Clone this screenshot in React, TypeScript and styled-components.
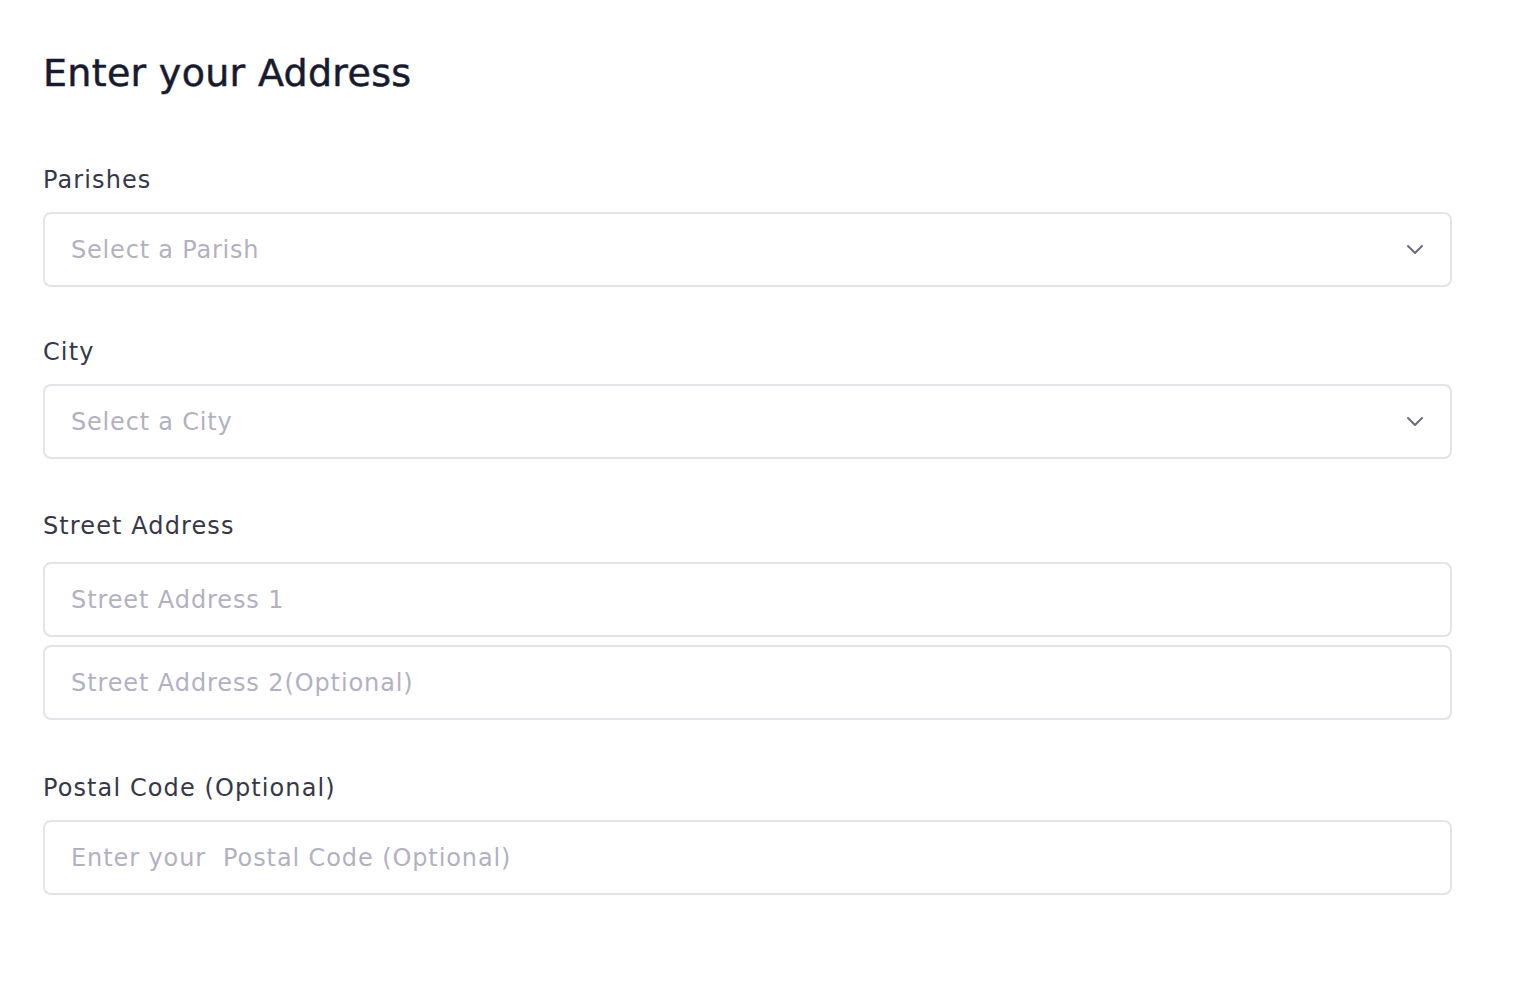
import { createGlobalStyle, styled } from "styled-components";

const GlobalStyle = createGlobalStyle`
  body {
    margin: 0;
    background: #ffffff;
    font-family: "DejaVu Sans", "Noto Sans", sans-serif;
  }
`;

const Page = styled.div`
  padding: 47px 43px 60px;
  width: 1409px;
`;

const Title = styled.h1`
  margin: 0 0 61px;
  font-size: 38px;
  line-height: 52px;
  font-weight: 400;
  letter-spacing: 0.3px;
  color: #181a2e;
  -webkit-text-stroke: 0.5px #181a2e;
`;

const Form = styled.form`
  display: flex;
  flex-direction: column;
  gap: 45px;
`;

const Field = styled.div`
  display: flex;
  flex-direction: column;
`;

const Label = styled.label<{ $top?: number; $gap?: number }>`
  font-size: 24px;
  line-height: 40px;
  letter-spacing: 1.1px;
  color: #363848;
  margin-top: ${(p) => p.$top ?? 0}px;
  margin-bottom: ${(p) => p.$gap ?? 12}px;
`;

const Stack = styled.div`
  display: flex;
  flex-direction: column;
  gap: 8px;
`;

const Input = styled.input`
  box-sizing: border-box;
  width: 100%;
  height: 75px;
  padding: 0 26px;
  border: 2px solid #e3e3eb;
  border-radius: 8px;
  font-family: inherit;
  font-size: 24px;
  letter-spacing: 0.9px;
  color: #363848;
  outline: none;
  &::placeholder {
    color: #b2b1c2;
  }
`;

const SelectBox = styled.div`
  box-sizing: border-box;
  height: 75px;
  padding: 0 26px;
  border: 2px solid #e3e3eb;
  border-radius: 8px;
  display: flex;
  align-items: center;
  justify-content: space-between;
  cursor: pointer;
`;

const Placeholder = styled.span`
  font-size: 24px;
  letter-spacing: 0.8px;
  color: #b2b1c2;
`;

const Chevron = () => (
  <svg width="18" height="11" viewBox="0 0 18 11" fill="none" stroke="#6b6b80" strokeWidth="2" strokeLinecap="round" strokeLinejoin="round">
    <path d="M2 2l7 7 7-7" />
  </svg>
);

export default function App() {
  return (
    <>
      <GlobalStyle />
      <Page>
        <Title>Enter your Address</Title>
        <Form onSubmit={(e) => e.preventDefault()}>
          <Field>
            <Label>Parishes</Label>
            <SelectBox>
              <Placeholder>Select a Parish</Placeholder>
              <Chevron />
            </SelectBox>
          </Field>
          <Field>
            <Label>City</Label>
            <SelectBox>
              <Placeholder>Select a City</Placeholder>
              <Chevron />
            </SelectBox>
          </Field>
          <Field>
            <Label $top={2} $gap={16}>Street Address</Label>
            <Stack>
              <Input placeholder="Street Address 1" />
              <Input placeholder="Street Address 2(Optional)" />
            </Stack>
          </Field>
          <Field>
            <Label $top={3} $gap={12}>Postal Code (Optional)</Label>
            <Input placeholder="Enter your  Postal Code (Optional)" />
          </Field>
        </Form>
      </Page>
    </>
  );
}
